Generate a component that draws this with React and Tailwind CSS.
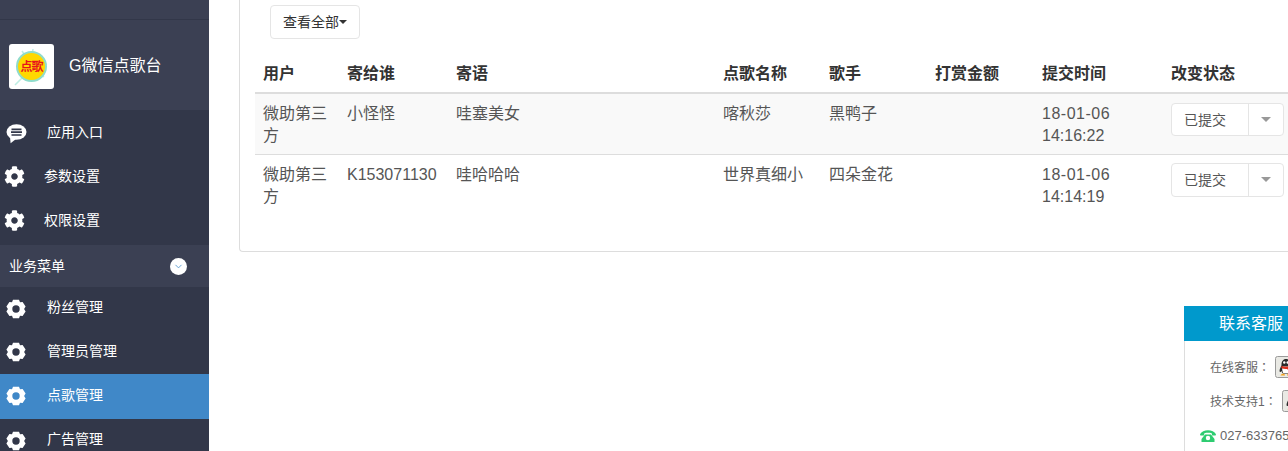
// App.jsx
import { ChevronDown } from "lucide-react";
import { FaCog } from "react-icons/fa";

const font = "font-['Liberation_Sans','Noto_Sans_CJK_SC',sans-serif]";

const topMenu = [
  { label: "应用入口", icon: "chat", textClass: "pl-[47px]" },
  { label: "参数设置", icon: "gear", textClass: "pl-[44px]" },
  { label: "权限设置", icon: "gear", textClass: "pl-[44px]" },
];

const bizMenu = [
  { label: "粉丝管理", rowClass: "h-[43px] pb-[2px]" },
  { label: "管理员管理", rowClass: "h-[44px] pb-[2px]" },
  { label: "点歌管理", rowClass: "h-[45px] pb-[2px] bg-[#4088c8]" },
  { label: "广告管理", rowClass: "h-[44px] pb-[3px]" },
];

const rows = [
  { user: "微助第三方", to: "小怪怪", msg: "哇塞美女", song: "喀秋莎", singer: "黑鸭子", date: "18-01-06", time: "14:16:22", rowClass: "bg-[#f9f9f9]", selectClass: "h-[33px]" },
  { user: "微助第三方", to: "K153071130", msg: "哇哈哈哈", song: "世界真细小", singer: "四朵金花", date: "18-01-06", time: "14:14:19", rowClass: "", selectClass: "h-[34px] -mt-[1px]" },
];

function ChatIcon() {
  return (
    <svg width="21" height="20" viewBox="0 0 21 20" className="absolute left-[6px] top-[14px]">
      <ellipse cx="10.500" cy="8" rx="10" ry="7.800" fill="#fff" />
      <path d="M4 13l.6 6.200L10 15z" fill="#fff" />
      <path d="M5.500 5.300h10M5 8.200h11M5.500 11h10" stroke="#323749" strokeWidth="1.700" />
    </svg>
  );
}

function LobedGear() {
  return (
    <svg width="20" height="20" viewBox="0 0 20 20" className="absolute left-[6px] top-[12px]">
      <path fillRule="evenodd" fill="#fff" d="M7 .8h6l1 2.400 2.600-.3 3 4.600-1.500 2.500 1.500 2.500-3 4.600-2.600-.3-1 2.400H7l-1-2.400-2.600.3-3-4.600L1.900 10 .4 7.500l3-4.600 2.600.3zM10 6.300a3.700 3.700 0 1 0 0 7.400 3.700 3.700 0 0 0 0-7.400z" />
    </svg>
  );
}

function QqIcon() {
  return (
    <svg width="22" height="22" viewBox="0 0 22 22" className="shrink-0">
      <rect x=".5" y=".5" width="21" height="21" rx="2" fill="#e9e9e4" stroke="#9a9a9a" />
      <path d="M11 3c-3 0-4.500 2.500-4.500 5.500 0 1-.2 1.500-1 3-1 2-1.300 4-.5 4.500.5.300 1-.3 1.500-1 .3 1 .8 2 1.500 2.500h6c.7-.5 1.200-1.500 1.500-2.500.5.700 1 1.300 1.500 1 .8-.5.500-2.500-.5-4.500-.8-1.500-1-2-1-3C15.500 5.500 14 3 11 3z" fill="#2a2a2a" />
      <path d="M7.800 10.500h6.400c.8 2 .8 4.500-.4 6.500H8.200c-1.200-2-1.200-4.500-.4-6.500z" fill="#fff" />
      <circle cx="9.300" cy="6.500" r="1.200" fill="#fff" />
      <circle cx="12.700" cy="6.500" r="1.200" fill="#fff" />
      <path d="M6.500 10c2.800 1 6.200 1 9 0l.3 1.800-1.800.6v2.300l-2-1.800c-2 .3-4 0-5.700-1z" fill="#e0301e" />
      <path d="M5.500 19.500c.5-1.500 2.500-2 4-1.500l.5 1.500zM12 19.500l.5-1.500c1.500-.5 3.500 0 4 1.500z" fill="#f5a623" />
    </svg>
  );
}

function PhoneIcon() {
  return (
    <svg width="16" height="12" viewBox="0 0 16 12" className="shrink-0">
      <path d="M0 4.200C1.500 1.500 4.500.2 8 .2s6.500 1.300 8 4l-.4 1.300h-3.400l-.5-2.300c-2.400-.6-4.900-.6-7.300 0l-.5 2.300H.4z" fill="#2ecc71" />
      <path fillRule="evenodd" d="M5 4.500h6l3.500 4.500V12h-13V9zM8 5.800a2.200 2.200 0 1 0 0 4.400 2.200 2.200 0 0 0 0-4.400z" fill="#2ecc71" />
    </svg>
  );
}

function Logo() {
  return (
    <div className="relative w-[45px] h-[45px] bg-white rounded-[3px] flex items-center justify-center">
      {/* spiky ring around the yellow disc */}
      <svg width="45" height="45" viewBox="0 0 45 45" className="absolute inset-0">
        <path d="M6 41l9-9M13 7l5 7M24 5l-1 7M38 20l-6 2M35 33l-5-4M7 22l6 1" stroke="#bdeee3" strokeWidth="1.500" />
      </svg>
      <div className="relative w-[31px] h-[31px] rounded-full bg-[#ffd800] border-2 border-[#8fdccb] flex items-center justify-center">
        <span className="text-[12px] leading-none font-bold text-[#e8141c] whitespace-nowrap tracking-[-1px]">点歌</span>
      </div>
    </div>
  );
}

function Sidebar() {
  return (
    <aside className="w-[209px] shrink-0 bg-[#323749] text-white text-[14px] h-[451px] overflow-hidden">
      <div className="h-[110px] bg-[#3b4053]">
        <div className="h-[20px] border-b border-[#323749]" />
        <div className="flex items-center pl-[9px] pt-[24px]">
          <Logo />
          <span className="ml-[15px] text-[16px] leading-[43px] pb-[2px]">G微信点歌台</span>
        </div>
      </div>
      {topMenu.map(item => (
        <div key={item.label} className={`relative h-[44px] leading-[44px] ${item.textClass}`}>
          {item.icon === "chat" ? <ChatIcon /> : <FaCog size={21} className="absolute left-[4px] top-[12px]" />}
          {item.label}
        </div>
      ))}
      <div className="mt-[3px] h-[42px] bg-[#3b4053] flex items-center justify-between pl-[9px] pr-[22px]">
        <span>业务菜单</span>
        <span className="w-[17px] h-[17px] rounded-full bg-white flex items-center justify-center">
          <ChevronDown size={11} strokeWidth={2} className="text-[#5a9bd0]" />
        </span>
      </div>
      {bizMenu.map(item => (
        <div key={item.label} className={`relative pl-[47px] flex items-center ${item.rowClass}`}>
          <LobedGear />
          {item.label}
        </div>
      ))}
    </aside>
  );
}

function StatusSelect({ className }) {
  return (
    <div className={`w-[113px] flex border border-[#e5e5e5] rounded-[4px] bg-white text-[14px] text-[#555] ${className}`}>
      <div className="w-[77px] border-r border-[#e5e5e5] pl-[12px] flex items-center">已提交</div>
      <div className="flex-1 flex items-center justify-center">
        <span className="w-0 h-0 border-x-[5px] border-x-transparent border-t-[5px] border-t-[#999]" />
      </div>
    </div>
  );
}

function SongTable() {
  const cell = "px-[8px] pt-[9px]";
  return (
    <table className="w-[1045px] table-fixed border-collapse text-[16px] leading-[22px] text-[#555]">
      <colgroup>
        <col className="w-[84px]" />
        <col className="w-[109px]" />
        <col className="w-[267px]" />
        <col className="w-[106px]" />
        <col className="w-[106px]" />
        <col className="w-[107px]" />
        <col className="w-[129px]" />
        <col className="w-[137px]" />
      </colgroup>
      <thead>
        <tr className="h-[39px] border-b-2 border-[#ddd] text-left text-[#333]">
          {["用户", "寄给谁", "寄语", "点歌名称", "歌手", "打赏金额", "提交时间", "改变状态"].map(h => (
            <th key={h} className="px-[8px] pt-[2px] font-bold">{h}</th>
          ))}
        </tr>
      </thead>
      <tbody>
        {rows.map(r => (
          <tr key={r.time} className={`h-[61px] border-b border-[#ddd] last:border-b-0 align-top ${r.rowClass}`}>
            <td className={cell}>{r.user}</td>
            <td className={cell}>{r.to}</td>
            <td className={cell}>{r.msg}</td>
            <td className={cell}>{r.song}</td>
            <td className={cell}>{r.singer}</td>
            <td className={cell}></td>
            <td className={cell}><span className="tracking-[0.5px]">{r.date}</span><br />{r.time}</td>
            <td className={cell}><StatusSelect className={r.selectClass} /></td>
          </tr>
        ))}
      </tbody>
    </table>
  );
}

function ContactBox() {
  const colon = <span className="font-['Noto_Sans_CJK_TC',sans-serif]">：</span>;
  return (
    <div className="absolute left-[1184px] top-[306px] w-[134px] h-[160px] bg-white border-l border-[#ddd] text-[12px] text-[#666]">
      <div className="-ml-px h-[35px] bg-[#0099cc] text-white text-[16px] leading-[35px] text-center">联系客服</div>
      <div className="flex items-center gap-[5px] pl-[25px] mt-[15px] h-[22px] whitespace-nowrap"><span>在线客服{colon}</span><QqIcon /></div>
      <div className="flex items-center gap-[5px] pl-[25px] mt-[12px] h-[22px] whitespace-nowrap"><span>技术支持1{colon}</span><QqIcon /></div>
      <div className="flex items-center gap-[4px] pl-[15px] mt-[14px] text-[13px] whitespace-nowrap">
        <PhoneIcon /><span className="w-[68px] overflow-hidden">027-633765</span>
      </div>
    </div>
  );
}

export default function App() {
  return (
    <div className={`relative flex w-[1288px] h-[451px] overflow-hidden bg-white ${font}`}>
      <Sidebar />
      <main className="flex-1 pl-[30px] min-w-0">
        <div className="w-[1100px] h-[252px] border-l border-b border-[#ddd] rounded-bl-[4px] pl-[15px]">
          <div className="pt-[5px] pl-[15px]">
            <button className="h-[34px] w-[90px] border border-[#e5e5e5] rounded-[4px] text-[14px] text-[#333] bg-white flex items-center justify-center">
              查看全部
              <span className="w-0 h-0 border-x-[4px] border-x-transparent border-t-[4px] border-t-[#333]" />
            </button>
          </div>
          <div className="mt-[15px]">
            <SongTable />
          </div>
        </div>
      </main>
      <ContactBox />
    </div>
  );
}
